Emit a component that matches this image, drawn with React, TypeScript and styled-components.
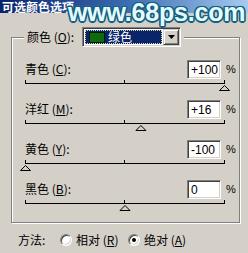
import React from "react";
import styled, { createGlobalStyle } from "styled-components";

const Global = createGlobalStyle`
  html, body { margin: 0; padding: 0; background: #d4d0c8; }
  body {
    font-family: "Noto Sans CJK SC", "Liberation Sans", sans-serif;
    font-size: 12px;
    line-height: 14px;
    color: #000;
  }
`;

const Window = styled.div`
  position: relative;
  width: 248px;
  height: 253px;
  overflow: hidden;
  background: #d4d0c8;
`;

const TitleBar = styled.div`
  height: 13px;
  padding-left: 2px;
  background: linear-gradient(to right, #0a246a 0%, #3a6ab0 50%, #a6caf0 100%);
  color: #fff;
  font-weight: bold;
  font-size: 12px;
  line-height: 13px;
  white-space: nowrap;
  overflow: hidden;
`;

const Watermark = styled.div`
  position: absolute;
  left: 68px;
  top: 0;
  font-family: "Liberation Sans", Arial, sans-serif;
  font-weight: bold;
  font-size: 25px;
  line-height: 25px;
  color: #e6fbff;
  letter-spacing: -0.2px;
  white-space: nowrap;
  text-shadow:
    1.5px 0 0 #14607e, -1.5px 0 0 #14607e, 0 1.5px 0 #14607e, 0 -1.5px 0 #14607e,
    1.2px 1.2px 0 #14607e, -1.2px 1.2px 0 #14607e, 1.2px -1.2px 0 #14607e, -1.2px -1.2px 0 #14607e,
    0 0 3px #4aa6c8;
`;

const Group = styled.fieldset`
  margin: 14px 0 0 11px;
  width: 229px;
  box-sizing: border-box;
  min-width: 0;
  padding: 12px 0 3px 0;
  border: 1px solid #808080;
  box-shadow: 1px 1px 0 #fff, inset 1px 1px 0 #fff;
`;

const Legend = styled.legend`
  margin-left: 12px;
  padding: 0 3px;
  height: 20px;
  display: flex;
  align-items: center;
  background: #d4d0c8;
`;

const LegendLabel = styled.span`
  width: 55px;
  white-space: nowrap;
`;

const Combo = styled.div`
  width: 99px;
  height: 20px;
  box-sizing: border-box;
  border: 1px solid;
  border-color: #808080 #fff #fff #808080;
  box-shadow: inset 1px 1px 0 #404040, inset -1px -1px 0 #d4d0c8;
  padding: 1px;
  background: #fff;
  display: flex;
`;

const ComboValue = styled.div`
  flex: 1;
  margin: 1px;
  box-sizing: border-box;
  border: 1px dotted #d8d8b0;
  background: #0a246a;
  color: #fff;
  display: flex;
  align-items: center;
  padding-left: 3px;
  gap: 3px;
`;

const Swatch = styled.span`
  width: 16px;
  height: 11px;
  box-sizing: border-box;
  border: 1px solid #021a02;
  background: #0e6a0e;
`;

const ComboButton = styled.div`
  width: 16px;
  height: 16px;
  box-sizing: border-box;
  border: 1px solid;
  border-color: #d4d0c8 #404040 #404040 #d4d0c8;
  box-shadow: inset 1px 1px 0 #fff, inset -1px -1px 0 #808080;
  background: #d4d0c8;
  display: flex;
  align-items: center;
  justify-content: center;
`;

const Row = styled.div`
  display: flex;
  flex-direction: column;
  height: 40px;
  padding-left: 13px;
`;

const RowHead = styled.div`
  display: flex;
  align-items: center;
  height: 20px;
`;

const RowLabel = styled.span`
  width: 162px;
  white-space: nowrap;
`;

const NumberBox = styled.div`
  width: 34px;
  height: 19px;
  box-sizing: border-box;
  border: 1px solid;
  border-color: #808080 #fff #fff #808080;
  box-shadow: inset 1px 1px 0 #404040, inset -1px -1px 0 #d4d0c8;
  background: #fff;
  padding: 2px 0 0 3px;
  font-family: "Liberation Sans", Arial, sans-serif;
  font-size: 12px;
  line-height: 14px;
`;

const Percent = styled.span`
  margin-left: 5px;
  font-family: "Liberation Sans", Arial, sans-serif;
  font-size: 11px;
`;

const SliderSvg = styled.svg`
  display: block;
  margin-left: -6px;
`;

const MethodRow = styled.div`
  display: flex;
  align-items: center;
  height: 14px;
  margin: 10px 0 0 18px;
`;

const MethodLabel = styled.span`
  width: 42px;
`;

const Radio = styled.span<{ $checked?: boolean }>`
  width: 12px;
  height: 12px;
  box-sizing: border-box;
  border-radius: 50%;
  border: 1px solid;
  border-color: #808080 #fff #fff #808080;
  box-shadow: inset 1px 1px 0 #404040, inset -1px -1px 0 #d4d0c8;
  background: #fff;
  display: flex;
  align-items: center;
  justify-content: center;
  &::after {
    content: "";
    width: 4px;
    height: 4px;
    border-radius: 50%;
    background: ${(p) => (p.$checked ? "#000" : "transparent")};
  }
`;

const RadioText = styled.span<{ $w?: number }>`
  margin-left: 4px;
  width: ${(p) => (p.$w ? `${p.$w}px` : "auto")};
  white-space: nowrap;
`;

const Key = styled.u`
  text-underline-offset: 1px;
`;

const OFF = 6;

function Slider({ value }: { value: number }) {
  const cx = ((value + 100) / 200) * 199 + 0.5 + OFF;
  return (
    <SliderSvg width={212} height={13} viewBox="0 0 212 13" shapeRendering="crispEdges">
      <line x1={OFF} y1={4.5} x2={OFF + 200} y2={4.5} stroke="#000" />
      <line x1={OFF + 0.5} y1={1} x2={OFF + 0.5} y2={5} stroke="#000" />
      <line x1={OFF + 99.5} y1={1} x2={OFF + 99.5} y2={5} stroke="#000" />
      <line x1={OFF + 199.5} y1={1} x2={OFF + 199.5} y2={5} stroke="#000" />
      <polygon
        points={`${cx},6.5 ${cx + 5},11.5 ${cx - 5},11.5`}
        fill="#d4d0c8"
        stroke="#000"
        shapeRendering="auto"
      />
    </SliderSvg>
  );
}

const rows = [
  { name: "青色", key: "C", value: 100, text: "+100" },
  { name: "洋红", key: "M", value: 16, text: "+16" },
  { name: "黄色", key: "Y", value: -100, text: "-100" },
  { name: "黑色", key: "B", value: 0, text: "0" },
];

export default function App() {
  return (
    <Window>
      <Global />
      <TitleBar>可选颜色选项</TitleBar>
      <Group>
        <Legend>
          <LegendLabel>
            颜色 (<Key>O</Key>):
          </LegendLabel>
          <Combo>
            <ComboValue>
              <Swatch />
              <span>绿色</span>
            </ComboValue>
            <ComboButton>
              <svg width="7" height="4" viewBox="0 0 7 4">
                <polygon points="0,0 7,0 3.5,4" fill="#000" />
              </svg>
            </ComboButton>
          </Combo>
        </Legend>
        {rows.map((r) => (
          <Row key={r.key}>
            <RowHead>
              <RowLabel>
                {r.name} (<Key>{r.key}</Key>):
              </RowLabel>
              <NumberBox>{r.text}</NumberBox>
              <Percent>%</Percent>
            </RowHead>
            <Slider value={r.value} />
          </Row>
        ))}
      </Group>
      <MethodRow>
        <MethodLabel>方法:</MethodLabel>
        <Radio />
        <RadioText $w={52}>
          相对 (<Key>R</Key>)
        </RadioText>
        <Radio $checked />
        <RadioText>
          绝对 (<Key>A</Key>)
        </RadioText>
      </MethodRow>
      <Watermark>www.68ps.com</Watermark>
    </Window>
  );
}
